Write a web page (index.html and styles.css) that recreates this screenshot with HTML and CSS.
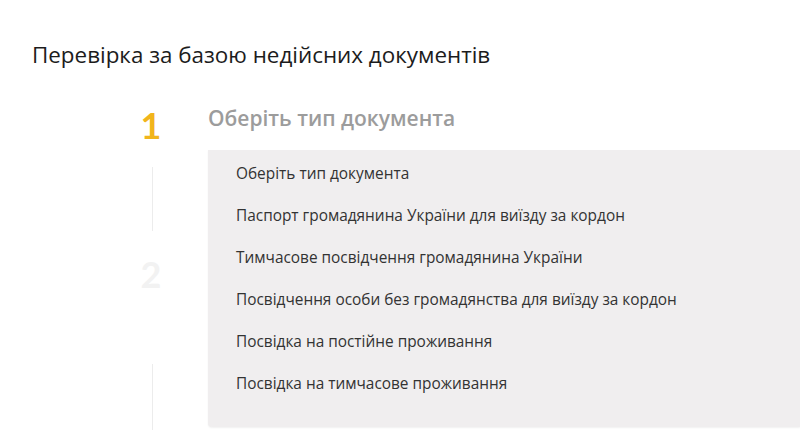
FILE: index.html
```html
<!DOCTYPE html>
<html lang="uk">
<head>
<meta charset="utf-8">
<link rel="stylesheet" href="styles.css">
</head>
<body>
<main class="page">
  <h1 class="title">Перевірка за базою недійсних документів</h1>
  <section class="steps">
    <div class="rail">
      <div class="num num-active">1</div>
      <div class="line line-1"></div>
      <div class="num num-idle">2</div>
      <div class="line line-2"></div>
    </div>
    <div class="content">
      <h2 class="step-title">Оберіть тип документа</h2>
      <ul class="menu">
        <li>Оберіть тип документа</li>
        <li>Паспорт громадянина України для виїзду за кордон</li>
        <li>Тимчасове посвідчення громадянина України</li>
        <li>Посвідчення особи без громадянства для виїзду за кордон</li>
        <li>Посвідка на постійне проживання</li>
        <li>Посвідка на тимчасове проживання</li>
      </ul>
    </div>
  </section>
</main>
</body>
</html>
```
FILE: styles.css
```css
html, body {
  margin: 0;
  padding: 0;
  background: #ffffff;
  overflow: hidden;
}
.page {
  font-family: "Open Sans", "Lato", sans-serif;
  width: 800px;
  height: 447px;
}
.title {
  margin: 0;
  padding: 42px 0 0 32px;
  font-size: 22.4px;
  font-weight: 400;
  color: #1c1c1c;
  line-height: 26px;
}
.steps {
  display: flex;
  margin-top: 33px;
}
.rail {
  width: 208px;
  display: flex;
  flex-direction: column;
  align-items: flex-start;
  padding-left: 138px;
  box-sizing: border-box;
}
.num {
  font-family: "Lato", sans-serif;
  font-size: 36px;
  font-weight: 700;
  line-height: 40px;
  width: 26px;
  text-align: center;
}
.num-active { color: #f1b51c; margin-top: 4px; }
.num-idle { color: #f2f2f2; margin-top: 23px; }
.line {
  width: 1px;
  background: #ececec;
  margin-left: 14px;
}
.line-1 { height: 64px; margin-top: 22px; }
.line-2 { height: 66px; margin-top: 70px; }
.content {
  flex: 1;
}
.step-title {
  margin: 0;
  font-size: 21px;
  font-weight: 600;
  color: #9c9c9c;
  line-height: 34px;
}
.menu {
  list-style: none;
  margin: 15px 0 0 0;
  padding: 3px 0 22px 28px;
  background: #f0eeef;
  border-radius: 0 0 0 4px;
  box-shadow: 0 1px 2px rgba(0,0,0,0.06);
}
.menu li {
  font-size: 15.4px;
  color: #333333;
  line-height: 42px;
}
```
